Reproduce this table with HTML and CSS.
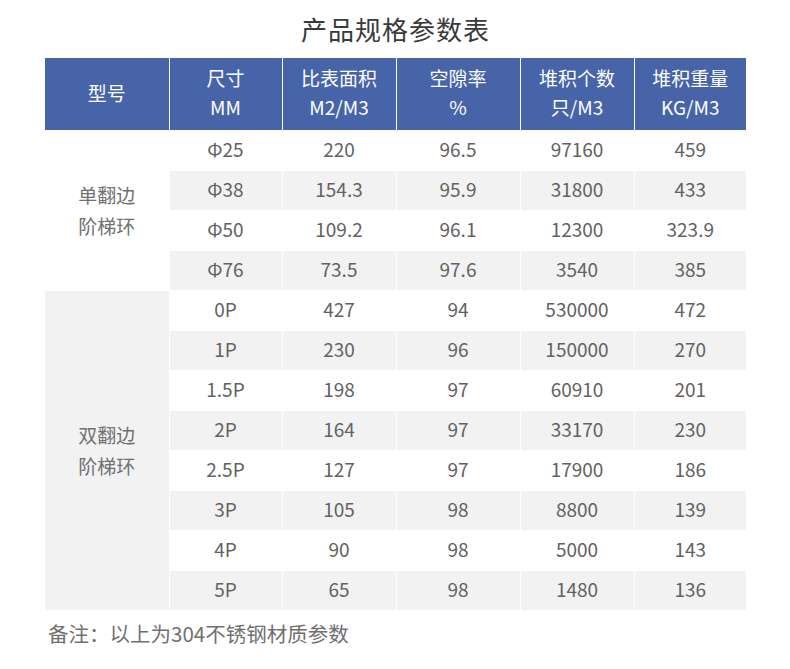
FILE: index.html
```html
<!DOCTYPE html>
<html lang="zh">
<head>
<meta charset="utf-8">
<link rel="stylesheet" href="styles.css">
</head>
<body>
<div class="page">
  <h1 class="title">产品规格参数表</h1>
  <table class="spec">
    <colgroup>
      <col class="c1"><col class="c2"><col class="c3"><col class="c4"><col class="c5"><col class="c6">
    </colgroup>
    <thead>
      <tr>
        <th>型号</th>
        <th>尺寸<br>MM</th>
        <th>比表面积<br>M2/M3</th>
        <th>空隙率<br>%</th>
        <th>堆积个数<br>只/M3</th>
        <th>堆积重量<br>KG/M3</th>
      </tr>
    </thead>
    <tbody>
      <tr class="odd"><td rowspan="4" class="group g1">单翻边<br>阶梯环</td><td>Φ25</td><td>220</td><td>96.5</td><td>97160</td><td>459</td></tr>
      <tr class="even"><td>Φ38</td><td>154.3</td><td>95.9</td><td>31800</td><td>433</td></tr>
      <tr class="odd"><td>Φ50</td><td>109.2</td><td>96.1</td><td>12300</td><td>323.9</td></tr>
      <tr class="even"><td>Φ76</td><td>73.5</td><td>97.6</td><td>3540</td><td>385</td></tr>
      <tr class="odd"><td rowspan="8" class="group g2">双翻边<br>阶梯环</td><td>0P</td><td>427</td><td>94</td><td>530000</td><td>472</td></tr>
      <tr class="even"><td>1P</td><td>230</td><td>96</td><td>150000</td><td>270</td></tr>
      <tr class="odd"><td>1.5P</td><td>198</td><td>97</td><td>60910</td><td>201</td></tr>
      <tr class="even"><td>2P</td><td>164</td><td>97</td><td>33170</td><td>230</td></tr>
      <tr class="odd"><td>2.5P</td><td>127</td><td>97</td><td>17900</td><td>186</td></tr>
      <tr class="even"><td>3P</td><td>105</td><td>98</td><td>8800</td><td>139</td></tr>
      <tr class="odd"><td>4P</td><td>90</td><td>98</td><td>5000</td><td>143</td></tr>
      <tr class="even"><td>5P</td><td>65</td><td>98</td><td>1480</td><td>136</td></tr>
    </tbody>
  </table>
  <p class="note">备注：以上为304不锈钢材质参数</p>
</div>
</body>
</html>
```

FILE: styles.css
```css
html, body {
  margin: 0;
  padding: 0;
  background: #fff;
}
body {
  font-family: "Noto Sans CJK SC", "Noto Sans", sans-serif;
  color: #555;
}
.page {
  width: 701px;
  margin-left: 45px;
  padding-top: 10px;
}
.title {
  margin: 0 0 10px;
  text-align: center;
  font-size: 26px;
  line-height: 38px;
  font-weight: 400;
  color: #3a3a3a;
  letter-spacing: 1px;
}
.spec {
  width: 701px;
  table-layout: fixed;
  border-collapse: collapse;
  border-spacing: 0;
}
.c1 { width: 124px; }
.c2 { width: 113px; }
.c3 { width: 114px; }
.c4 { width: 124px; }
.c5 { width: 114px; }
.c6 { width: 112px; }
.spec th {
  background: #4764a9;
  color: #fff;
  font-weight: 400;
  font-size: 19px;
  line-height: 29px;
  height: 72px;
  padding: 0 0 4px;
  box-sizing: border-box;
  text-align: center;
  vertical-align: middle;
  border-left: 1px solid #fff;
}
.spec th:first-child { border-left: none; }
.spec td {
  height: 40px;
  padding: 0 0 3px;
  text-align: center;
  vertical-align: middle;
  font-size: 19px;
  font-weight: 400;
  color: #626262;
  border-left: 1px solid #fff;
  border-bottom: 1px solid #fff;
  box-sizing: border-box;
}
.spec tr.even td { background: #f2f2f2; }
.spec tr.odd td { background: #fff; }
.spec td.group {
  border-left: none;
  line-height: 31px;
  color: #707070;
  padding: 0;
}
.spec tr td.g1 { background: #fff; }
.spec tr td.g2 { background: #f2f2f2; }
.note {
  margin: 8px 0 0 3px;
  font-size: 20.5px;
  line-height: 28px;
  font-weight: 400;
  color: #707070;
}
```
